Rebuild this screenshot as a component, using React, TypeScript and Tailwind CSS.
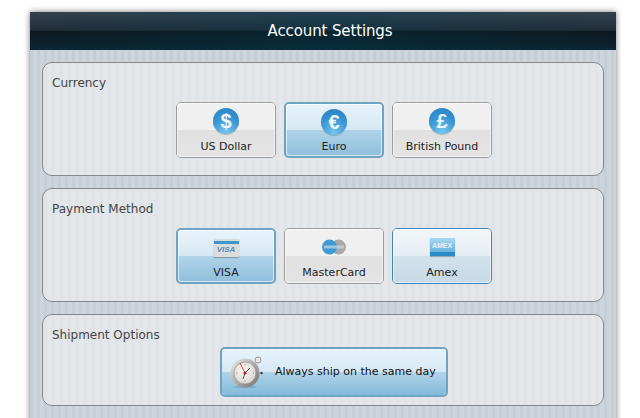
const stripes =
  "bg-[repeating-linear-gradient(90deg,#c5cdd6_0px,#c5cdd6_3px,#cdd4dc_3px,#cdd4dc_7px)]";

type Variant = "plain" | "selected" | "hover";

const buttonStyles: Record<Variant, { frame: string; top: string; bottom: string; iconBox: string }> = {
  plain: {
    frame: "border border-[#9a9a9a]",
    top: "bg-[#f0f0f0]",
    bottom: "bg-[linear-gradient(#e0e0e0,#e4e4e4)]",
    iconBox: "h-[36px]",
  },
  selected: {
    frame: "border-2 border-[#6ea3c4]",
    top: "bg-[linear-gradient(#e8f3fa,#d5e8f4)]",
    bottom: "bg-[linear-gradient(#b0d3e8,#8fc0dd)]",
    iconBox: "h-[35px]",
  },
  hover: {
    frame: "border border-[#3c85b5]",
    top: "bg-[linear-gradient(#f2f6f9,#e6eef4)]",
    bottom: "bg-[linear-gradient(#d3e2ec,#c5d9e6)]",
    iconBox: "h-[36px]",
  },
};

function Coin({ symbol }: { symbol: string }) {
  return (
    <div className="flex h-[26px] w-[26px] items-center justify-center rounded-full bg-[radial-gradient(circle_at_50%_90%,#74c6ef,#3793d2_55%,#2480bf)] font-['Liberation_Sans',sans-serif] text-[20px] leading-none font-bold text-[#eef7fc] shadow-[0_1px_1px_rgba(0,0,0,0.2)]">
      {symbol}
    </div>
  );
}

function CardIcon({ label, color }: { label: string; color: "grey" | "blue" }) {
  if (color === "grey") {
    return (
      <div className="flex h-[18px] w-[25px] flex-col bg-[#dcdcdc] shadow-[0_1px_1px_rgba(0,0,0,0.25)]">
        <div className="mt-[2px] h-[3px] bg-[#3f97c9]" />
        <div className="flex flex-1 items-center justify-center font-['Liberation_Sans',sans-serif] text-[8px] leading-none font-bold text-[#4f8fbb] italic">
          {label}
        </div>
      </div>
    );
  }
  return (
    <div className="flex h-[18px] w-[25px] flex-col bg-[linear-gradient(#a8d8f0,#56a9d8)] shadow-[0_1px_1px_rgba(0,0,0,0.25)]">
      <div className="flex flex-1 items-center justify-center font-['Liberation_Sans',sans-serif] text-[7px] leading-none font-bold text-[#e4f2fa]">
        {label}
      </div>
      <div className="h-[4px] bg-[#2a8ac2]" />
    </div>
  );
}

function MasterIcon() {
  return (
    <svg width="26" height="18" viewBox="0 0 26 18">
      <circle cx="17.5" cy="9" r="7.5" fill="#a9a9a9" />
      <circle cx="8.5" cy="9" r="7.5" fill="#3f9ad4" />
      <rect x="3" y="7.5" width="20" height="3" fill="#cfe0ea" opacity="0.65" />
    </svg>
  );
}

function ClockIcon() {
  return (
    <svg width="34" height="34" viewBox="0 0 34 34">
      <defs>
        <linearGradient id="rim" x1="0" y1="0" x2="1" y2="1">
          <stop offset="0" stopColor="#ececec" />
          <stop offset="0.55" stopColor="#a8a6a4" />
          <stop offset="1" stopColor="#6e6c6c" />
        </linearGradient>
        <radialGradient id="face" cx="0.45" cy="0.4" r="0.7">
          <stop offset="0" stopColor="#fbf9f6" />
          <stop offset="1" stopColor="#d6d0ca" />
        </radialGradient>
      </defs>
      <ellipse cx="15" cy="32" rx="12" ry="1.5" fill="#5d8fae" opacity="0.4" />
      <circle cx="28" cy="5" r="3" fill="#e8e8e8" stroke="#999" />
      <circle cx="31.5" cy="18" r="1.2" fill="#333" />
      <circle cx="15" cy="18" r="14.5" fill="url(#rim)" />
      <circle cx="15" cy="18" r="11" fill="url(#face)" stroke="#8b8b8b" strokeWidth="0.6" />
      <path d="M15 9v1.5M15 25.5V27M6 18h1.5M22.5 18H24" stroke="#888" strokeWidth="0.7" />
      <path d="M15 18 L10 8" stroke="#c8333a" strokeWidth="0.9" />
      <path d="M15 18 L20 13" stroke="#555" strokeWidth="1" />
      <path d="M15 18 L13 24" stroke="#555" strokeWidth="1" />
      <circle cx="15" cy="18" r="1.6" fill="#a82028" />
    </svg>
  );
}

function OptionButton({
  label,
  variant,
  icon,
}: {
  label: string;
  variant: Variant;
  icon: React.ReactNode;
}) {
  const s = buttonStyles[variant];
  return (
    <div className={`relative h-[56px] w-[100px] overflow-hidden rounded-[5px] ${s.frame}`}>
      <div className={`absolute inset-x-0 top-0 h-1/2 ${s.top}`} />
      <div className={`absolute inset-x-0 bottom-0 h-1/2 ${s.bottom}`} />
      <div className="absolute inset-0 flex flex-col items-center rounded-[4px] shadow-[inset_0_0_0_1px_rgba(255,255,255,0.6)]">
        <div className={`flex w-full items-center justify-center ${s.iconBox}`}>{icon}</div>
        <div className="text-center text-[11px] leading-[16px] text-[#222]">{label}</div>
      </div>
    </div>
  );
}

function Section({
  title,
  height,
  children,
}: {
  title: string;
  height: string;
  children: React.ReactNode;
}) {
  return (
    <section
      className={`rounded-[10px] border border-[#84898e] bg-[repeating-linear-gradient(90deg,#e0e3e7_0px,#e0e3e7_4px,#e4e7ea_4px,#e4e7ea_8px)] pt-[13px] ${height}`}
    >
      <h2 className="pl-[9px] text-[12px] leading-[15px] font-normal text-[#444]">{title}</h2>
      {children}
    </section>
  );
}

export default function App() {
  return (
    <div className="h-[418px] w-[640px] overflow-hidden bg-white pt-3 pl-[30px] font-['DejaVu_Sans',sans-serif]">
      <div className={`h-[420px] w-[586px] shadow-[0_0_6px_rgba(0,0,0,0.55)] ${stripes}`}>
        <header className="flex h-[38px] items-center justify-center bg-[linear-gradient(90deg,rgba(0,0,0,0),rgba(0,60,85,0.35)_50%,rgba(0,0,0,0)),linear-gradient(#33424f_0%,#1f2d38_48%,#0e191f_50%,#0b2430_100%)] pl-[14px] text-[15px] tracking-[-0.13px] text-white">
          Account Settings
        </header>
        <div className="flex flex-col gap-[12px] px-[12px] pt-[12px]">
          <Section title="Currency" height="h-[114px]">
            <div className="mt-[11px] flex justify-center gap-2 pl-[22px]">
              <OptionButton label="US Dollar" variant="plain" icon={<Coin symbol="$" />} />
              <OptionButton label="Euro" variant="selected" icon={<Coin symbol="€" />} />
              <OptionButton label="British Pound" variant="plain" icon={<Coin symbol="£" />} />
            </div>
          </Section>
          <Section title="Payment Method" height="h-[114px]">
            <div className="mt-[11px] flex justify-center gap-2 pl-[22px]">
              <OptionButton label="VISA" variant="selected" icon={<CardIcon label="VISA" color="grey" />} />
              <OptionButton label="MasterCard" variant="plain" icon={<MasterIcon />} />
              <OptionButton label="Amex" variant="hover" icon={<CardIcon label="AMEX" color="blue" />} />
            </div>
          </Section>
          <Section title="Shipment Options" height="h-[92px]">
            <div className="mt-[4px] flex justify-center pl-[22px]">
              <div className="relative h-[50px] w-[228px] overflow-hidden rounded-[5px] border-2 border-[#6ea3c4]">
                <div className="absolute inset-x-0 top-0 h-1/2 bg-[linear-gradient(#e8f3fa,#d5e8f4)]" />
                <div className="absolute inset-x-0 bottom-0 h-1/2 bg-[linear-gradient(#b0d3e8,#85bbdc)]" />
                <div className="absolute inset-0 flex items-center gap-[11px] pl-[8px]">
                  <ClockIcon />
                  <span className="text-[11px] whitespace-nowrap text-[#111]">Always ship on the same day</span>
                </div>
              </div>
            </div>
          </Section>
        </div>
      </div>
    </div>
  );
}
